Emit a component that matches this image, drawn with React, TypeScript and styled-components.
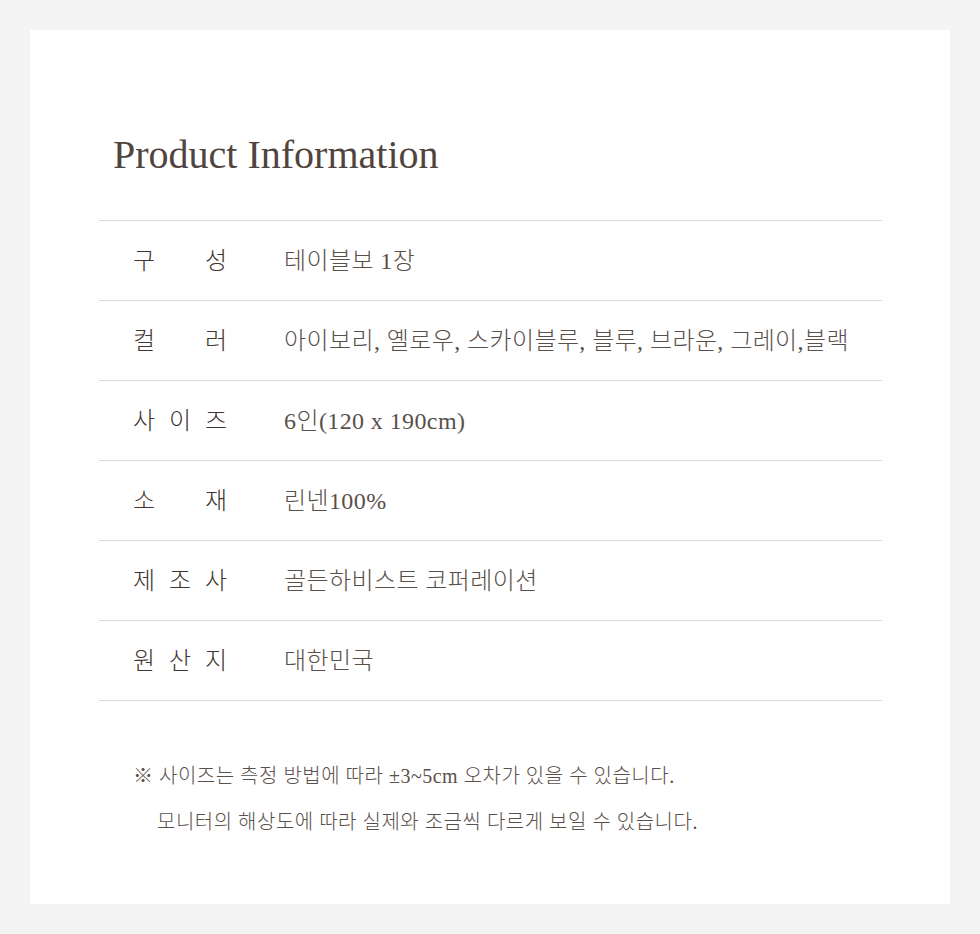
import styled, { createGlobalStyle } from "styled-components";

const GlobalStyle = createGlobalStyle`
body {
  margin: 0;
  background: #f4f4f4;
  font-family: "Liberation Serif", "Noto Sans CJK KR", serif;
  color: #4a403a;
}
`;

const Page = styled.div`
padding: 30px;
`;

const Card = styled.section`
background: #ffffff;
height: 874px;
box-sizing: border-box;
padding: 102px 68px 0 69px;
`;

const Title = styled.h1`
margin: 0 0 42px 14px;
font-size: 40px;
font-weight: 400;
line-height: 46px;
color: #4f443e;
`;

const InfoTable = styled.div`
border-top: 1px solid #dcdcdc;
`;

const Row = styled.div`
display: flex;
align-items: center;
height: 80px;
box-sizing: border-box;
padding: 0 0 4px 34px;
border-bottom: 1px solid #dcdcdc;
`;

const Label = styled.div`
display: flex;
justify-content: space-between;
width: 94px;
margin-right: 57px;
font-size: 24px;
font-weight: 300;
color: #3f3530;
`;

const Value = styled.div`
font-size: 24px;
font-weight: 300;
color: #5a504a;
letter-spacing: 0.4px;
`;

const Notes = styled.div`
padding: 61px 0 0 34px;
`;

const Note = styled.p<{ indent?: boolean }>`
margin: 0 0 18px;
padding-left: ${(p) => (p.indent ? "24px" : "0")};
font-size: 20px;
font-weight: 300;
line-height: 28px;
letter-spacing: 0.5px;
color: #5a504a;
`;

interface InfoRow {
  label: string;
  value: string;
}

const rows: InfoRow[] = [
  { label: "구성", value: "테이블보 1장" },
  { label: "컬러", value: "아이보리, 옐로우, 스카이블루, 블루, 브라운, 그레이,블랙" },
  { label: "사이즈", value: "6인(120 x 190cm)" },
  { label: "소재", value: "린넨100%" },
  { label: "제조사", value: "골든하비스트 코퍼레이션" },
  { label: "원산지", value: "대한민국" },
];

function App() {
  return (
    <Page>
      <GlobalStyle />
      <Card>
        <Title>Product Information</Title>
        <InfoTable>
          {rows.map((row) => (
            <Row key={row.label}>
              <Label>
                {row.label.split("").map((ch, i) => (
                  <span key={i}>{ch}</span>
                ))}
              </Label>
              <Value>{row.value}</Value>
            </Row>
          ))}
        </InfoTable>
        <Notes>
          <Note>※ 사이즈는 측정 방법에 따라 ±3~5cm 오차가 있을 수 있습니다.</Note>
          <Note indent>모니터의 해상도에 따라 실제와 조금씩 다르게 보일 수 있습니다.</Note>
        </Notes>
      </Card>
    </Page>
  );
}

export default App;
